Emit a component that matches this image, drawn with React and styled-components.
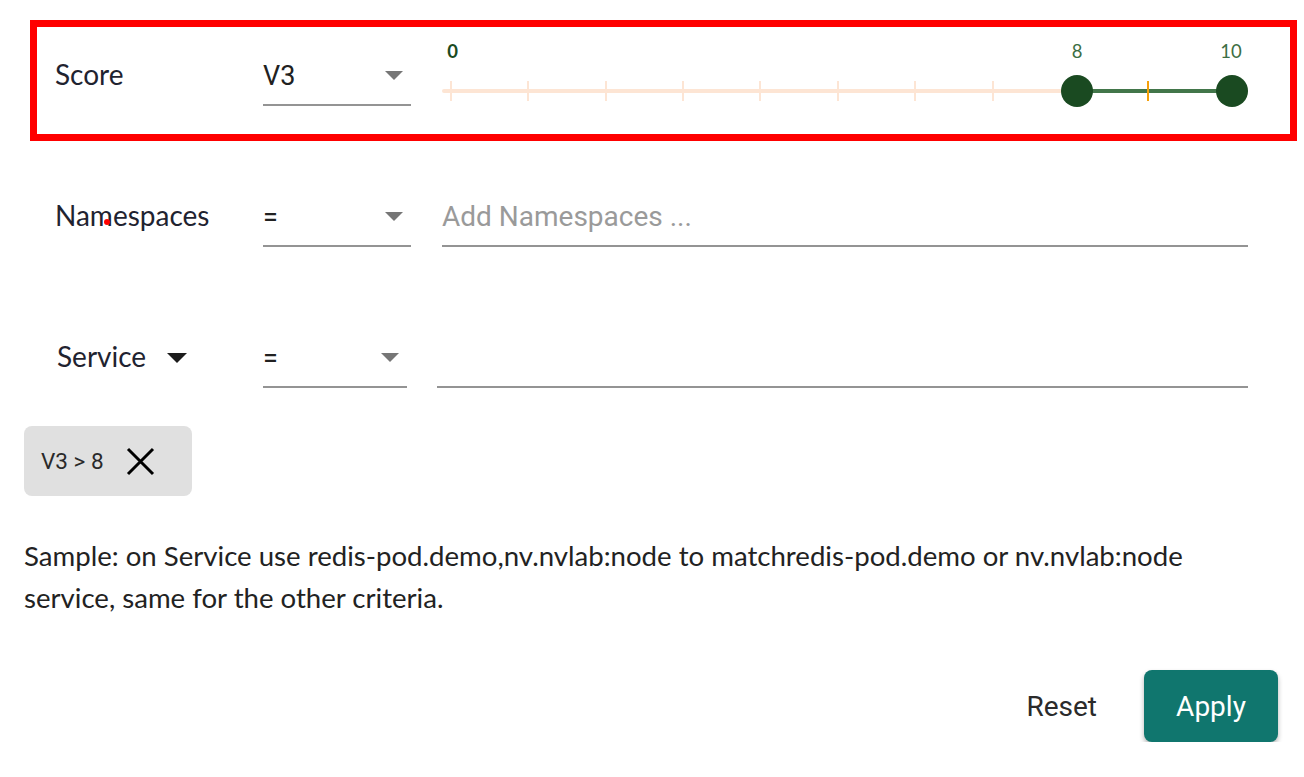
import React from 'react';
import styled, { createGlobalStyle } from 'styled-components';

const GlobalStyle = createGlobalStyle`
	body {
		margin: 0;
		background: #ffffff;
		font-family: Roboto, "Liberation Sans", sans-serif;
	}
`;

const Page = styled.div`
	box-sizing: border-box;
	width: 1304px;
	padding: 20px 26px 0 24px;
`;

const FilterRow = styled.div`
	box-sizing: border-box;
	height: 121px;
	margin: 0 -19px 20px 6px;
	padding: 0 42px 0 18px;
	border: 7px solid ${(p) => (p.highlighted ? '#ff0000' : 'transparent')};
	display: flex;
	align-items: center;
`;

const Label = styled.div`
	position: relative;
	box-sizing: border-box;
	width: 208px;
	height: 50px;
	padding-bottom: 13px;
	display: flex;
	align-items: center;
	font-family: Lato, "Open Sans", sans-serif;
	font-size: 28px;
	color: #1f2330;
`;

const LabelCaret = styled.span`
	margin-left: 21px;
	margin-top: 4px;
	width: 0;
	height: 0;
	border-left: 10px solid transparent;
	border-right: 10px solid transparent;
	border-top: 10px solid #1c1c1c;
`;

const Marker = styled.span`
	position: absolute;
	left: 49px;
	top: 22px;
	width: 6px;
	height: 6px;
	border-radius: 50%;
	background: #ff0000;
`;

const Select = styled.div`
	box-sizing: border-box;
	width: ${(p) => p.width}px;
	margin-right: ${(p) => p.gap}px;
	height: 50px;
	padding: 0 8px 8px 0;
	border-bottom: 2px solid #949494;
	display: flex;
	align-items: center;
	justify-content: space-between;
	font-size: 27px;
	color: #212121;
`;

const Caret = styled.span`
	width: 0;
	height: 0;
	border-left: 9px solid transparent;
	border-right: 9px solid transparent;
	border-top: 9px solid #767676;
`;

const TextInput = styled.input`
	flex: 1;
	box-sizing: border-box;
	height: 50px;
	padding: 0 0 8px 0;
	border: none;
	border-bottom: 2px solid #949494;
	outline: none;
	background: transparent;
	font-family: Roboto, "Liberation Sans", sans-serif;
	font-size: 28px;
	color: #212121;

	&::placeholder {
		color: #9a9a9a;
	}
`;

const Slider = styled.div`
	position: relative;
	flex: 1;
	align-self: stretch;
`;

const Track = styled.div`
	position: absolute;
	left: 0;
	right: 0;
	top: 62px;
	height: 4px;
	border-radius: 2px;
	background: #fde5d4;
`;

const Selection = styled.div`
	position: absolute;
	top: 62px;
	height: 4px;
	background: #42764a;
`;

const Tick = styled.div`
	position: absolute;
	top: 54px;
	width: 2px;
	height: 20px;
	margin-left: -1px;
	background: ${(p) => (p.active ? '#f5a00a' : '#fde5d4')};
`;

const Thumb = styled.div`
	position: absolute;
	top: 48px;
	width: 32px;
	height: 32px;
	margin-left: -16px;
	border-radius: 50%;
	background: #1a4a21;
`;

const Bubble = styled.div`
	position: absolute;
	top: 12px;
	transform: translateX(-50%);
	font-family: Lato, "Open Sans", sans-serif;
	font-size: 18.5px;
	line-height: 24px;
	font-weight: ${(p) => (p.floor ? 700 : 400)};
	color: ${(p) => (p.floor ? '#1a4a21' : '#3c6e44')};
`;

const ChipRow = styled.div`
	margin-top: -17px;
`;

const Chip = styled.div`
	box-sizing: border-box;
	display: inline-flex;
	align-items: center;
	gap: 22px;
	width: 168px;
	height: 70px;
	padding-left: 17px;
	border-radius: 8px;
	background: #e0e0e0;
	font-size: 22.5px;
	color: #2a2a2a;
`;

const Hint = styled.p`
	margin: 39px 0 0 0;
	font-family: Lato, "Open Sans", sans-serif;
	font-size: 27.6px;
	line-height: 42px;
	color: #222222;
`;

const Actions = styled.div`
	margin-top: 51px;
	display: flex;
	justify-content: flex-end;
	align-items: center;
	gap: 47px;
`;

const TextButton = styled.button`
	border: none;
	background: none;
	padding: 0;
	font-family: Roboto, "Liberation Sans", sans-serif;
	font-size: 28px;
	color: #2b2b2b;
`;

const PrimaryButton = styled.button`
	width: 134px;
	height: 72px;
	border: none;
	border-radius: 8px;
	background: #10766e;
	box-shadow: 0 3px 5px rgba(0, 0, 0, 0.3);
	font-family: Roboto, "Liberation Sans", sans-serif;
	font-size: 28px;
	color: #ffffff;
`;

const TICK_START = 8.7;
const TICK_STEP = 77.43;
const THUMB_SHIFT = 7;
const tickX = (v) => TICK_START + TICK_STEP * v;
const thumbX = (v) => tickX(v) + THUMB_SHIFT;

const RangeSlider = ({ low, high, max }) => (
	<Slider>
		<Track />
		<Selection style={{ left: thumbX(low), width: thumbX(high) - thumbX(low) }} />
		{Array.from({ length: max + 1 }, (_, i) => (
			<Tick key={i} active={i > low && i < high} style={{ left: tickX(i) }} />
		))}
		<Bubble floor style={{ left: tickX(0) + 2 }}>0</Bubble>
		<Bubble style={{ left: thumbX(low) }}>{low}</Bubble>
		<Bubble style={{ left: thumbX(high) - 1 }}>{high}</Bubble>
		<Thumb style={{ left: thumbX(low) }} />
		<Thumb style={{ left: thumbX(high) }} />
	</Slider>
);

const CloseIcon = () => (
	<svg width="29" height="29" viewBox="0 0 29 29">
		<path d="M2 2 L27 27 M27 2 L2 27" stroke="#000" strokeWidth="3" fill="none" />
	</svg>
);

const App = () => (
	<Page>
		<GlobalStyle />
		<FilterRow highlighted>
			<Label>Score</Label>
			<Select width={148} gap={31}>
				<span>V3</span>
				<Caret />
			</Select>
			<RangeSlider low={8} high={10} max={10} />
		</FilterRow>
		<FilterRow>
			<Label>
				Namespaces
				<Marker />
			</Label>
			<Select width={148} gap={31}>
				<span>=</span>
				<Caret />
			</Select>
			<TextInput placeholder="Add Namespaces ..." />
		</FilterRow>
		<FilterRow>
			<Label style={{ paddingLeft: 2 }}>
				Service
				<LabelCaret />
			</Label>
			<Select width={144} gap={30}>
				<span>=</span>
				<Caret />
			</Select>
			<TextInput />
		</FilterRow>
		<ChipRow>
			<Chip>
				<span>V3 &gt; 8</span>
				<CloseIcon />
			</Chip>
		</ChipRow>
		<Hint>
			Sample: on Service use redis-pod.demo,nv.nvlab:node to matchredis-pod.demo or nv.nvlab:node
			service, same for the other criteria.
		</Hint>
		<Actions>
			<TextButton>Reset</TextButton>
			<PrimaryButton>Apply</PrimaryButton>
		</Actions>
	</Page>
);

export default App;
